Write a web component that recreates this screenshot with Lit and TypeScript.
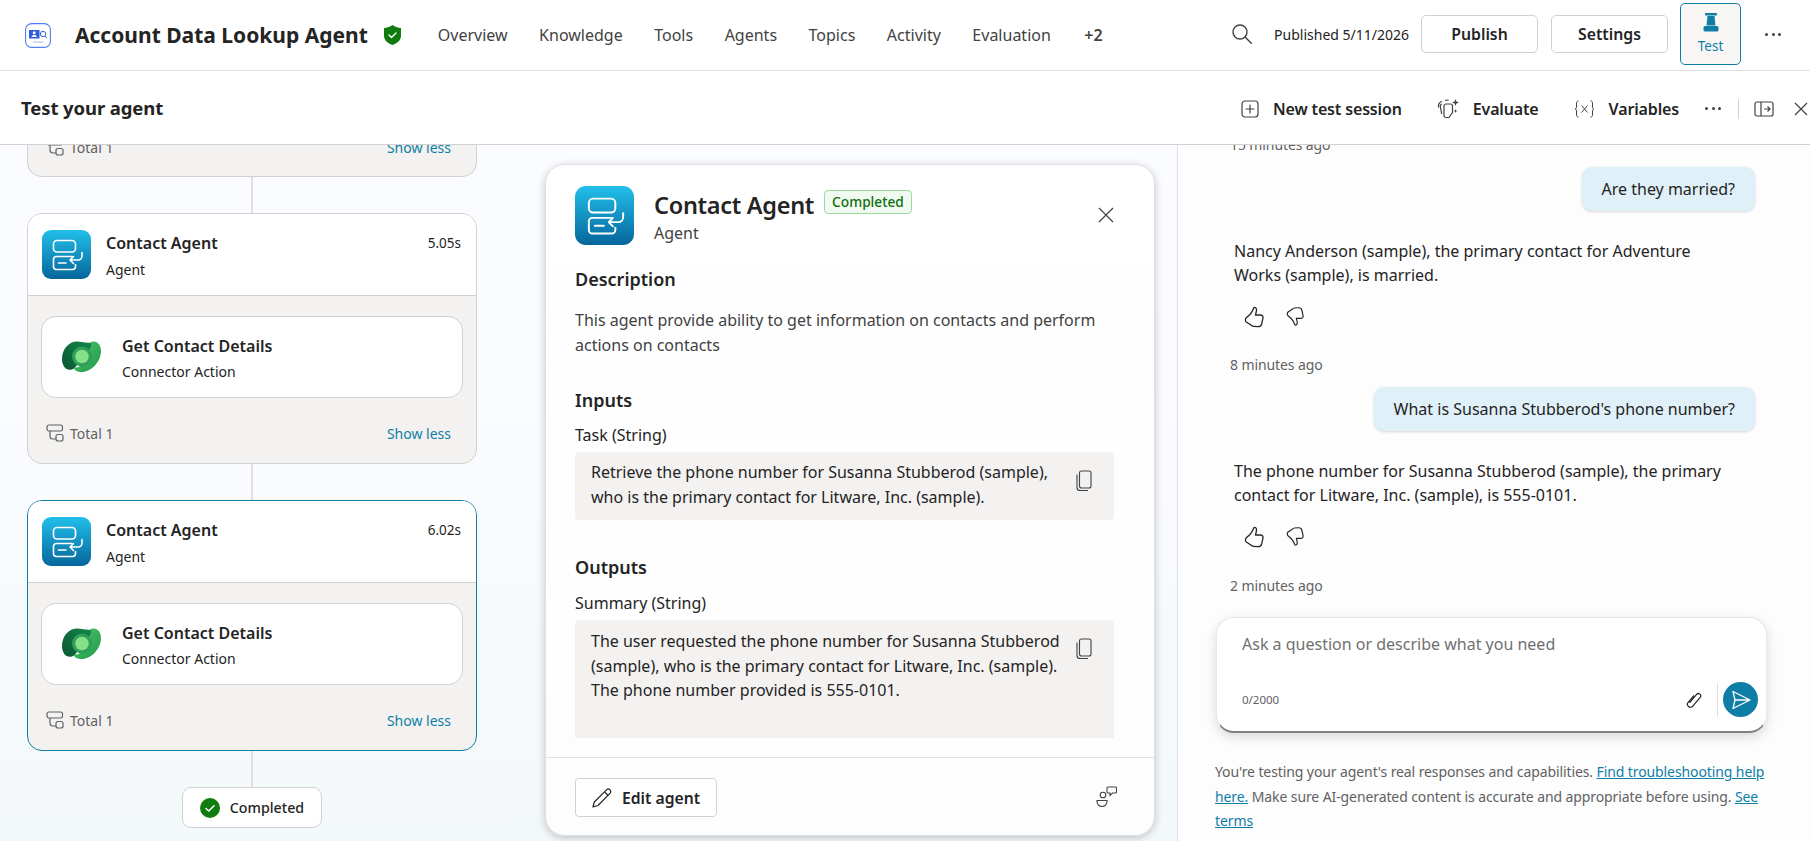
import { LitElement, html, css } from "lit";
import { customElement } from "lit/decorators.js";

const agentIcon = (size: number) => html`
  <svg width=${size} height=${size} viewBox="0 0 49 49" fill="none">
    <defs>
      <linearGradient id="ag" x1="0" y1="0" x2="0" y2="1">
        <stop offset="0" stop-color="#22bfea" />
        <stop offset="1" stop-color="#05669c" />
      </linearGradient>
    </defs>
    <rect width="49" height="49" rx="9" fill="url(#ag)" />
    <rect x="11.5" y="10.5" width="22" height="11.5" rx="3.5" stroke="#fff" stroke-width="1.6" />
    <path d="M33.5 34v2.500a3 3 0 0 1-3 3h-16a3 3 0 0 1-3-3v-7a3 3 0 0 1 3-3h16" stroke="#fff" stroke-width="1.6" />
    <path d="M16.5 33h7.5" stroke="#fff" stroke-width="1.6" stroke-linecap="round" />
    <path d="M40 22.5v3.5a4 4 0 0 1-4 4h-7M31.5 26.5l-3.5 3.5 3.5 3.5" stroke="#fff" stroke-width="1.6" stroke-linecap="round" stroke-linejoin="round" />
  </svg>
`;

const dataverseIcon = html`
  <svg width="40" height="32" viewBox="0 0 40 32">
    <defs>
      <linearGradient id="dvr" x1="0" y1="0" x2="1" y2="1">
        <stop offset="0" stop-color="#52c46a" />
        <stop offset="1" stop-color="#1f9a4c" />
      </linearGradient>
      <linearGradient id="dvd" x1="0" y1="1" x2="1" y2="0">
        <stop offset="0" stop-color="#0a5530" />
        <stop offset="1" stop-color="#14874a" />
      </linearGradient>
    </defs>
    <path d="M29 1c6-2 10 3 10 9 0 11-10 21-19 21-5 0-8-2-9-5 4 2 16-1 18-25z" fill="url(#dvr)" />
    <path d="M15 0.500c6 0 10 2 14 1 1 8-4 10-9 14-3 5-5 11-10 13C4 30 0 25 0 18 0 8 7 .5 15 .5z" fill="url(#dvd)" />
    <circle cx="20" cy="15.500" r="10" fill="#2ea05a" />
    <circle cx="20" cy="15.500" r="6.800" fill="#86e08a" />
  </svg>
`;

const totalIcon = html`
  <svg width="18" height="18" viewBox="0 0 18 18" fill="none" stroke="#616161" stroke-width="1.200">
    <rect x="1" y="1" width="15.500" height="6" rx="2" />
    <path d="M4 7v5a3 3 0 0 0 3 3h3" />
    <rect x="10" y="10.500" width="7" height="6.500" rx="2" />
  </svg>
`;

const copyIcon = html`
  <svg width="16" height="21" viewBox="0 0 16 21" fill="none" stroke="#424242" stroke-width="1.100">
    <rect x="3.500" y="1" width="11.500" height="17" rx="2" />
    <path d="M1 4.500v13a3 3 0 0 0 3 3h8" />
  </svg>
`;

const thumbPath = "M10 1.500c1.500-.5 2.500.8 2.500 2.500 0 1.800-.8 3.600-1 5h4.800c1.800 0 3 1.200 2.700 2.800l-1.300 6c-.4 1.900-2 3-3.800 2.900l-4.400-.3c-1.200-.1-2-.7-3-1.600L2.300 16c-1.200-1.200-1.200-3 0-4.200L6 8.500c2-2 3-4.500 4-7z";

const thumbUp = html`
  <svg width="20" height="22" viewBox="0 0 20 22" fill="none" stroke="#242424" stroke-width="1.300" stroke-linejoin="round">
    <path d=${thumbPath} />
  </svg>
`;

const thumbDown = html`
  <svg width="18" height="21" viewBox="0 0 20 22" fill="none" stroke="#242424" stroke-width="1.300" stroke-linejoin="round">
    <path transform="matrix(1 0 0 -1 0 22)" d=${thumbPath} />
  </svg>
`;

const agentRow = (time: string) => html`
  <div class="card-head">
    ${agentIcon(49)}
    <div class="card-names">
      <div class="card-title">Contact Agent</div>
      <div class="card-sub">Agent</div>
    </div>
    <div class="card-time">${time}</div>
  </div>
`;

const cardFooter = html`
  <div class="card-foot">
    ${totalIcon}
    <span class="total">Total 1</span>
    <span class="show-less">Show less</span>
  </div>
`;

const cardBody = html`
  <div class="card-body">
    <div class="action">
      <div class="action-icon">${dataverseIcon}</div>
      <div>
        <div class="action-title">Get Contact Details</div>
        <div class="action-sub">Connector Action</div>
      </div>
    </div>
    ${cardFooter}
  </div>
`;

@customElement("app-root")
export class AppRoot extends LitElement {
  static styles = css`
    :host {
      display: block;
      width: 1810px;
      height: 841px;
      overflow: hidden;
      font-family: "Noto Sans", "Open Sans", sans-serif;
      font-size: 16px;
      color: #242424;
      background: #fff;
    }
    .app {
      display: flex;
      flex-direction: column;
      height: 841px;
    }

    /* top bar */
    .topbar {
      flex: none;
      height: 71px;
      box-sizing: border-box;
      display: flex;
      align-items: center;
      border-bottom: 1px solid #e0e0e0;
      background: #fff;
    }
    .logo {
      margin-left: 25px;
      display: flex;
    }
    .app-title {
      margin-left: 24px;
      font-size: 21px;
      font-weight: 700;
      white-space: nowrap;
    }
    .shield {
      margin-left: 16px;
      display: flex;
    }
    .tabs {
      display: flex;
      gap: 31.500px;
      margin-left: 37px;
      color: #424242;
    }
    .tabs .more {
      font-weight: 600;
      margin-left: 2px;
    }
    .top-right {
      margin-left: auto;
      margin-top: -2px;
      display: flex;
      align-items: center;
    }
    .published {
      margin-left: 22px;
      margin-right: 12px;
      font-size: 14px;
      white-space: nowrap;
    }
    .btn {
      height: 38px;
      width: 117px;
      box-sizing: border-box;
      border: 1px solid #d1d1d1;
      border-radius: 5px;
      background: #fff;
      display: flex;
      align-items: center;
      justify-content: center;
      font-weight: 600;
      font-size: 15.8px;
      margin-right: 13px;
    }
    .test-btn {
      width: 61px;
      height: 62px;
      box-sizing: border-box;
      border: 1px solid #0f7ea6;
      border-radius: 5px;
      background: #f8f7f6;
      color: #0f7ea6;
      font-size: 13.5px;
      display: flex;
      flex-direction: column;
      align-items: center;
      justify-content: center;
      gap: 5px;
      margin-left: -1px;
      margin-right: 24px;
    }
    .dots {
      display: flex;
      gap: 3.500px;
      margin-right: 29px;
    }
    .dots i {
      width: 3px;
      height: 3px;
      border-radius: 50%;
      background: #424242;
    }

    /* sub header */
    .subhead {
      flex: none;
      height: 74px;
      box-sizing: border-box;
      display: flex;
      align-items: center;
      border-bottom: 1px solid #d1d1d1;
      background: #fff;
    }
    .sub-title {
      margin-left: 21px;
      font-size: 18.500px;
      font-weight: 700;
      letter-spacing: -0.1px;
    }
    .toolbar {
      margin-left: auto;
      margin-top: 2px;
      display: flex;
      align-items: center;
      font-size: 16px;
      font-weight: 600;
      letter-spacing: -0.15px;
    }
    .tool {
      display: flex;
      align-items: center;
      gap: 14px;
      margin-right: 35px;
      white-space: nowrap;
      color: #242424;
    }
    .tool.tight {
      margin-right: 26px;
    }
    .toolbar .dots {
      margin-right: 17px;
    }
    .vsep {
      width: 1px;
      height: 20px;
      background: #d1d1d1;
      margin-right: 15px;
    }
    .icon-row {
      display: flex;
      align-items: center;
      gap: 20px;
      margin-right: 2px;
    }

    /* main */
    .main {
      flex: 1;
      min-height: 0;
      display: flex;
    }
    .left {
      width: 1178px;
      flex: none;
      display: flex;
      overflow: hidden;
      background: linear-gradient(180deg, #fbfcff 0%, #f9fbfe 50%, #f3f8fb 100%);
      border-right: 1px solid #e0e0e0;
      box-sizing: border-box;
    }
    .flow {
      width: 450px;
      margin-left: 27px;
      flex: none;
      display: flex;
      flex-direction: column;
      align-items: center;
      margin-top: -21px;
    }
    .card {
      width: 100%;
      box-sizing: border-box;
      border: 1px solid #d1d1d1;
      border-radius: 15px;
      background: #f3f2f1;
      overflow: hidden;
    }
    .card.active {
      border-color: #0f7ea6;
    }
    .card-head {
      height: 82px;
      box-sizing: border-box;
      background: #fff;
      border-bottom: 1px solid #d1d1d1;
      display: flex;
      align-items: flex-start;
      padding: 16px 15px 0 14px;
      gap: 15px;
    }
    .card-names {
      flex: 1;
    }
    .card-title {
      font-weight: 600;
      font-size: 16px;
      line-height: 24px;
      margin-top: 1px;
    }
    .card-sub {
      font-size: 14px;
      line-height: 20px;
      margin-top: 5px;
    }
    .card-time {
      font-size: 13.500px;
      line-height: 24px;
      margin-top: 1px;
    }
    .card-body {
      padding: 20px 13px 0;
      height: 167px;
      box-sizing: border-box;
    }
    .action {
      height: 82px;
      box-sizing: border-box;
      background: #fff;
      border: 1px solid #d1d1d1;
      border-radius: 15px;
      display: flex;
      align-items: center;
      padding: 2px 0 0 20px;
      gap: 20px;
    }
    .action-icon {
      display: flex;
      margin-top: -2px;
    }
    .action-title {
      font-weight: 600;
      font-size: 16px;
      line-height: 22px;
    }
    .action-sub {
      font-size: 14px;
      line-height: 20px;
      margin-top: 5px;
    }
    .card-foot {
      height: 70px;
      display: flex;
      align-items: center;
      padding: 0 12px 0 5px;
      gap: 6px;
      font-size: 14px;
    }
    .clipped {
      height: 53px;
      flex: none;
      border-top: none;
      border-radius: 0 0 15px 15px;
    }
    .clipped .card-foot {
      height: 46px;
      padding: 0 25px 0 18px;
    }
    .total {
      color: #616161;
    }
    .show-less {
      margin-left: auto;
      color: #0f7ea6;
    }
    .line {
      width: 2px;
      height: 36px;
      flex: none;
      background: #e0e0e0;
    }
    .done {
      width: 140px;
      height: 41px;
      box-sizing: border-box;
      border: 1px solid #d1d1d1;
      border-radius: 9px;
      background: #fff;
      display: flex;
      align-items: center;
      justify-content: center;
      gap: 10px;
      font-weight: 500;
      font-size: 14.200px;
      flex: none;
    }

    /* detail panel */
    .detail {
      width: 610px;
      height: 672px;
      margin: 19px 0 0 68px;
      box-sizing: border-box;
      background: linear-gradient(180deg, #fff 0%, #fdfdfe 100%);
      border: 1px solid #e0e0e0;
      border-radius: 20px;
      box-shadow: 0 2px 8px rgba(0, 0, 0, 0.22);
      display: flex;
      flex-direction: column;
      flex: none;
      overflow: hidden;
    }
    .d-head {
      display: flex;
      align-items: flex-start;
      padding: 21px 40px 0 29px;
      gap: 20px;
    }
    .d-names {
      flex: 1;
    }
    .d-title-row {
      display: flex;
      align-items: center;
      gap: 10px;
      margin-top: 4px;
      height: 30px;
    }
    .d-title {
      font-size: 23.500px;
      font-weight: 600;
      letter-spacing: -0.3px;
    }
    .badge {
      height: 24px;
      box-sizing: border-box;
      padding: 0 7px;
      border: 1px solid #9fd89f;
      border-radius: 4px;
      background: #f1faf1;
      color: #0e700e;
      font-size: 13.700px;
      font-weight: 500;
      line-height: 22px;
      margin-top: -6px;
    }
    .d-sub {
      color: #424242;
      line-height: 22px;
      margin-top: 2px;
    }
    .d-close {
      margin-top: 21px;
      display: flex;
    }
    .d-body {
      flex: 1;
      min-height: 0;
      overflow: hidden;
      padding: 0 40px 0 29px;
    }
    h3 {
      margin: 0;
      font-size: 18px;
      font-weight: 600;
      line-height: 26px;
    }
    .desc {
      margin: 0;
      line-height: 24.500px;
      color: #424242;
    }
    .field-label {
      line-height: 22px;
      color: #242424;
    }
    .box {
      background: #f4f2f1;
      border-radius: 4px;
      display: flex;
      justify-content: space-between;
      padding: 8px 22px 0 16px;
      box-sizing: border-box;
      line-height: 24.500px;
      color: #242424;
    }
    .box svg {
      flex: none;
      margin-top: 10px;
    }
    .box.short {
      height: 68px;
      margin-top: 6px;
    }
    .box.tall {
      height: 118px;
      margin-top: 6px;
      padding-top: 9px;
      border-radius: 4px 4px 0 0;
    }
    .box.tall svg {
      margin-top: 9px;
    }
    .d-foot {
      flex: none;
      height: 78px;
      box-sizing: border-box;
      border-top: 1px solid #e0e0e0;
      display: flex;
      align-items: flex-start;
      justify-content: space-between;
      padding: 20px 37px 0 29px;
    }
    .d-foot > svg {
      margin-top: 8px;
    }
    .edit {
      width: 142px;
      height: 39px;
      box-sizing: border-box;
      border: 1px solid #d1d1d1;
      border-radius: 4px;
      background: #fff;
      display: flex;
      align-items: center;
      padding-left: 16px;
      gap: 10px;
      font-weight: 600;
      font-size: 15.700px;
    }

    /* chat */
    .chat {
      flex: 1;
      min-width: 0;
      display: flex;
      flex-direction: column;
      background: #fdfdfe;
      overflow: hidden;
    }
    .log {
      height: 472px;
      flex: none;
      overflow: hidden;
      padding: 0 55px 0 52px;
    }
    .stamp {
      font-size: 14px;
      color: #616161;
      line-height: 20px;
      letter-spacing: -0.1px;
    }
    .bubble-row {
      display: flex;
      justify-content: flex-end;
    }
    .bubble {
      height: 44px;
      box-sizing: border-box;
      padding: 0 20px;
      display: flex;
      align-items: center;
      background: #dff0f9;
      border-radius: 10px;
      box-shadow: 0 1px 3px rgba(0, 0, 0, 0.16);
      white-space: nowrap;
    }
    .reply {
      margin: 0;
      line-height: 24px;
      padding-left: 4px;
    }
    .thumbs {
      display: flex;
      gap: 22px;
      margin: 19px 0 0 14px;
      height: 22px;
    }
    .composer {
      width: 551px;
      height: 116px;
      margin-left: 38px;
      flex: none;
      box-sizing: border-box;
      background: #fff;
      border-radius: 18px;
      border: 1px solid #e8e8e8;
      border-bottom: 2px solid #808080;
      box-shadow: 0 4px 12px rgba(0, 0, 0, 0.14);
      display: flex;
      flex-direction: column;
      padding: 14px 8px 0 25px;
    }
    .placeholder {
      color: #707070;
      line-height: 24px;
    }
    .comp-foot {
      display: flex;
      align-items: center;
      margin-top: 26px;
    }
    .count {
      font-size: 11.500px;
      color: #616161;
      margin-right: auto;
    }
    .clip {
      display: flex;
      margin-right: 15px;
    }
    .comp-sep {
      width: 1px;
      height: 34px;
      background: #e0e0e0;
      margin-right: 5px;
    }
    .send {
      width: 35px;
      height: 35px;
      border-radius: 50%;
      background: #0f7ea6;
      display: flex;
      align-items: center;
      justify-content: center;
    }
    .note {
      margin: 27px 44px 0 37px;
      font-size: 14px;
      line-height: 24.500px;
      color: #616161;
      letter-spacing: -0.1px;
    }
    .note a {
      color: #0f7ea6;
      text-decoration: underline;
    }
  `;

  render() {
    return html`
      <div class="app">
        <header class="topbar">
          <div class="logo">
            <svg width="26" height="25" viewBox="0 0 26 25" fill="none">
              <rect x="0.600" y="0.600" width="24.800" height="23.800" rx="6" fill="#fff" stroke="#4f7ff5" stroke-width="1.100" />
              <rect x="4" y="7" width="10.500" height="8.500" fill="#2f5fd8" />
              <circle cx="9.200" cy="9.800" r="1.500" fill="#fff" />
              <path d="M6.500 14c.4-1.600 1.500-2.100 2.700-2.100s2.300.5 2.700 2.100z" fill="#fff" />
              <circle cx="18" cy="11" r="2.700" stroke="#3a66d8" stroke-width="1" />
              <path d="M20 13l2 2.200" stroke="#3a66d8" stroke-width="1" />
              <path d="M8 19h10" stroke="#a9b7dc" stroke-width="1" />
            </svg>
          </div>
          <div class="app-title">Account Data Lookup Agent</div>
          <div class="shield">
            <svg width="17" height="20" viewBox="0 0 17 20">
              <path d="M8.500 0C11 1.800 13.500 2.800 17 3v7.500c0 4.500-3 7.500-8.500 9.500C3 18 0 15 0 10.500V3c3.500-.2 6-1.200 8.500-3z" fill="#107c10" />
              <path d="M5 10l2.500 2.500L12 8" fill="none" stroke="#fff" stroke-width="1.400" stroke-linecap="round" stroke-linejoin="round" />
            </svg>
          </div>
          <nav class="tabs">
            <span>Overview</span>
            <span>Knowledge</span>
            <span>Tools</span>
            <span>Agents</span>
            <span>Topics</span>
            <span>Activity</span>
            <span>Evaluation</span>
            <span class="more">+2</span>
          </nav>
          <div class="top-right">
            <svg width="20" height="20" viewBox="0 0 20 20" fill="none" stroke="#424242" stroke-width="1.400">
              <circle cx="8" cy="8" r="7" />
              <path d="M13 13l6.300 6.300" stroke-linecap="round" />
            </svg>
            <span class="published">Published 5/11/2026</span>
            <div class="btn">Publish</div>
            <div class="btn">Settings</div>
            <div class="test-btn">
              <svg width="16" height="19" viewBox="0 0 16 19" fill="#0f7ea6">
                <rect x="2" y="0" width="12" height="2.500" rx="0.800" />
                <path d="M4.500 3h7l1 9.500h-9z" />
                <rect x="0.500" y="13" width="15" height="5.500" rx="1.500" />
              </svg>
              <span>Test</span>
            </div>
            <div class="dots"><i></i><i></i><i></i></div>
          </div>
        </header>

        <div class="subhead">
          <div class="sub-title">Test your agent</div>
          <div class="toolbar">
            <div class="tool">
              <svg width="18" height="18" viewBox="0 0 18 18" fill="none" stroke="#424242" stroke-width="1.200">
                <rect x="1" y="1" width="16" height="16" rx="3" />
                <path d="M9 5v8M5 9h8" stroke-linecap="round" />
              </svg>
              New test session
            </div>
            <div class="tool">
              <svg width="22" height="21" viewBox="0 0 22 21" fill="none" stroke="#424242" stroke-width="1.200">
                <path d="M9 6h4.500a2 2 0 0 1 2 2v6.500L12 19.500H9a2 2 0 0 1-2-2V8a2 2 0 0 1 2-2z" />
                <path d="M4.800 6C3.500 6.500 3 7.500 3.300 9l1.500 7" />
                <path d="M1.500 9.500C.8 6.500 2.500 4 5 3.500M8 2.500c1.200-.6 2.500-.6 3.700-.2" />
                <path d="M18.500 1l.9 2.600 2.600.9-2.600.9-.9 2.600-.9-2.600-2.600-.9 2.600-.9z" fill="#424242" stroke="none" />
                <path d="M18.500 11l.5 1.500 1.500.5-1.500.5-.5 1.500-.5-1.500-1.500-.5 1.500-.5z" fill="#424242" stroke="none" />
              </svg>
              Evaluate
            </div>
            <div class="tool tight">
              <svg width="21" height="18" viewBox="0 0 21 18" fill="none" stroke="#424242" stroke-width="1">
                <path d="M4.500 1C2.500 1 2.500 2 2.500 4v3c0 1-.5 2-1.500 2 1 0 1.500 1 1.500 2v3c0 2 0 3 2 3" />
                <path d="M16.500 1c2 0 2 1 2 3v3c0 1 .5 2 1.500 2-1 0-1.500 1-1.500 2v3c0 2 0 3-2 3" />
                <path d="M7.500 5.500l6 7M13.500 5.500l-6 7" />
              </svg>
              Variables
            </div>
            <div class="dots"><i></i><i></i><i></i></div>
            <div class="vsep"></div>
            <div class="icon-row">
              <svg width="20" height="16" viewBox="0 0 20 16" fill="none" stroke="#424242" stroke-width="1.200">
                <rect x="1" y="1" width="18" height="14" rx="2" />
                <path d="M7 1v14M10 8h6M13.500 5.500L16 8l-2.500 2.500" />
              </svg>
              <svg width="14" height="14" viewBox="0 0 14 14" fill="none" stroke="#424242" stroke-width="1.200">
                <path d="M1 1l12 12M13 1L1 13" />
              </svg>
            </div>
          </div>
        </div>

        <div class="main">
          <section class="left">
            <div class="flow">
              <div class="card clipped">${cardFooter}</div>
              <div class="line"></div>
              <div class="card">${agentRow("5.05s")}${cardBody}</div>
              <div class="line"></div>
              <div class="card active">${agentRow("6.02s")}${cardBody}</div>
              <div class="line"></div>
              <div class="done">
                <svg width="20" height="20" viewBox="0 0 20 20">
                  <circle cx="10" cy="10" r="10" fill="#107c10" />
                  <path d="M6 10.500l2.800 2.500L14 7.800" fill="none" stroke="#fff" stroke-width="1.500" stroke-linecap="round" stroke-linejoin="round" />
                </svg>
                Completed
              </div>
            </div>

            <div class="detail">
              <div class="d-head">
                ${agentIcon(59)}
                <div class="d-names">
                  <div class="d-title-row">
                    <span class="d-title">Contact Agent</span>
                    <span class="badge">Completed</span>
                  </div>
                  <div class="d-sub">Agent</div>
                </div>
                <div class="d-close">
                  <svg width="16" height="16" viewBox="0 0 16 16" fill="none" stroke="#424242" stroke-width="1.200">
                    <path d="M1 1l14 14M15 1L1 15" />
                  </svg>
                </div>
              </div>
              <div class="d-body">
                <h3 style="margin-top:21px">Description</h3>
                <p class="desc" style="margin-top:16px">This agent provide ability to get information on contacts and perform actions on contacts</p>
                <h3 style="margin-top:30px">Inputs</h3>
                <div class="field-label" style="margin-top:11px">Task (String)</div>
                <div class="box short">
                  <span>Retrieve the phone number for Susanna Stubberod (sample),<br />who is the primary contact for Litware, Inc. (sample).</span>
                  ${copyIcon}
                </div>
                <h3 style="margin-top:34px">Outputs</h3>
                <div class="field-label" style="margin-top:12px">Summary (String)</div>
                <div class="box tall">
                  <span>The user requested the phone number for Susanna Stubberod<br />(sample), who is the primary contact for Litware, Inc. (sample).<br />The phone number provided is 555-0101.</span>
                  ${copyIcon}
                </div>
              </div>
              <div class="d-foot">
                <div class="edit">
                  <svg width="20" height="20" viewBox="0 0 20 20" fill="none" stroke="#242424" stroke-width="1.200" stroke-linejoin="round">
                    <path d="M1 19l1.300-5L14.500 1.800c1-1 2.500-1 3.500 0s1 2.500 0 3.500L6 17.500z" />
                    <path d="M12.500 3.800l3.700 3.700" />
                  </svg>
                  Edit agent
                </div>
                <svg width="21" height="21" viewBox="0 0 21 21" fill="none" stroke="#424242" stroke-width="1.100">
                  <circle cx="7" cy="9" r="2.800" />
                  <path d="M1 14.500h10c.3 3.500-2 6-5 6s-5.300-2.500-5-6z" />
                  <path d="M12 1h7.500a1 1 0 0 1 1 1v4a1 1 0 0 1-1 1h-3l-2.500 2.500V7h-2a1 1 0 0 1-1-1V2a1 1 0 0 1 1-1z" />
                </svg>
              </div>
            </div>
          </section>

          <section class="chat">
            <div class="log">
              <div class="stamp" style="margin-top:-10px">15 minutes ago</div>
              <div class="bubble-row" style="margin-top:12px">
                <div class="bubble">Are they married?</div>
              </div>
              <p class="reply" style="margin-top:28px">Nancy Anderson (sample), the primary contact for Adventure<br />Works (sample), is married.</p>
              <div class="thumbs">${thumbUp}${thumbDown}</div>
              <div class="stamp" style="margin-top:27px">8 minutes ago</div>
              <div class="bubble-row" style="margin-top:12px">
                <div class="bubble">What is Susanna Stubberod's phone number?</div>
              </div>
              <p class="reply" style="margin-top:28px">The phone number for Susanna Stubberod (sample), the primary<br />contact for Litware, Inc. (sample), is 555-0101.</p>
              <div class="thumbs">${thumbUp}${thumbDown}</div>
              <div class="stamp" style="margin-top:28px">2 minutes ago</div>
            </div>
            <div class="composer">
              <div class="placeholder">Ask a question or describe what you need</div>
              <div class="comp-foot">
                <span class="count">0/2000</span>
                <span class="clip">
                  <svg width="16" height="18" viewBox="-8 -9 16 18" fill="none" stroke="#242424" stroke-width="1.200" stroke-linecap="round">
                    <path transform="rotate(40)" d="M-3 -3V5.500a3 3 0 0 0 6 0V-6a2.300 2.300 0 0 0-4.600 0V4.500" />
                  </svg>
                </span>
                <span class="comp-sep"></span>
                <span class="send">
                  <svg width="20" height="20" viewBox="0 0 20 20" fill="none" stroke="#fff" stroke-width="1.300" stroke-linejoin="round">
                    <path d="M2 1.500L19 10 2 18.500l2-8.500zM4 10h15" />
                  </svg>
                </span>
              </div>
            </div>
            <p class="note">You're testing your agent's real responses and capabilities. <a>Find troubleshooting help here.</a> Make sure AI-generated content is accurate and appropriate before using. <a>See terms</a></p>
          </section>
        </div>
      </div>
    `;
  }
}
